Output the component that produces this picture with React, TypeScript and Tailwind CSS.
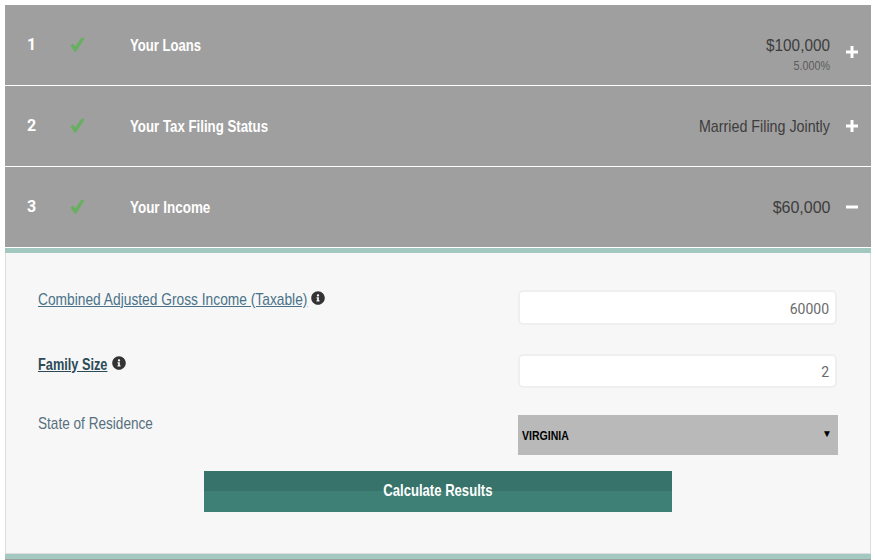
import { FaInfoCircle } from 'react-icons/fa';

const sans = { fontFamily: '"Liberation Sans", Arial, sans-serif' };

function CheckMark() {
  return (
    <svg viewBox="0 0 15 15" className="w-[15px] h-[15px] text-[#66b060]" fill="currentColor">
      <path d="M0.5 8.2 L3 6.6 L5.2 9.6 L11.6 0.5 L14.5 1.6 L6.2 14.5 L4.2 14.5 Z" />
    </svg>
  );
}

function PlusMinus({ open }: { open?: boolean }) {
  return (
    <svg viewBox="0 0 12 12" className="w-[12px] h-[12px] text-white" fill="currentColor">
      <rect x="0" y="4.5" width="12" height="3" />
      {!open && <rect x="4.5" y="0" width="3" height="12" />}
    </svg>
  );
}

function Row({ n, title, titleClass, value, valueClass, sub, open }: { n: number; title: string; titleClass: string; value: string; valueClass: string; sub?: string; open?: boolean }) {
  return (
    <div className="h-[80px] bg-[#9f9f9f] flex items-center pl-[22px] pr-[13px]">
      <span className="w-[43px] text-[16px] font-bold text-white font-['Roboto']">{n}</span>
      <span className="w-[60px] -mt-[2px]">
        <CheckMark />
      </span>
      <span className={`inline-block mt-[2px] origin-left text-[17px] font-bold text-white ${titleClass}`} style={sans}>{title}</span>
      <div className="relative ml-auto flex flex-col items-end pt-[1px]">
        <span className={`inline-block origin-right text-[17px] leading-[20px] text-[#3d3d3d] ${valueClass}`} style={sans}>{value}</span>
        {sub && <span className="absolute right-0 top-[23px] inline-block origin-right scale-x-[.83] text-[13px] leading-[16px] text-[#5c5c5c] whitespace-nowrap" style={sans}>{sub}</span>}
      </div>
      <span className={`ml-[16px] flex ${sub ? 'mt-[14px]' : ''}`}>
        <PlusMinus open={open} />
      </span>
    </div>
  );
}

export default function App() {
  return (
    <div className="h-[560px] overflow-hidden bg-white pt-[5px] pl-[5px] pr-[4px]">
      <div className="flex flex-col gap-[1px]">
        <Row n={1} title="Your Loans" titleClass="scale-x-[.77]" value="$100,000" valueClass="scale-x-[.9]" sub="5.000%" />
        <Row n={2} title="Your Tax Filing Status" titleClass="scale-x-[.78]" value="Married Filing Jointly" valueClass="scale-x-[.84]" />
        <Row n={3} title="Your Income" titleClass="scale-x-[.79]" value="$60,000" valueClass="scale-x-[.94]" open />
      </div>

      <div className="mt-[1px] h-[5px] bg-[#a3c8c0]" />

      {/* Income panel */}
      <div className="h-[301px] bg-[#f7f7f7] border-x border-b border-[#dddddd] pl-[32px] pr-[32px] pt-[37px]">
        <div className="flex h-[64px]">
          <div className="w-[480px] flex items-start text-[17px] leading-[20px] text-[#4a7288]" style={sans}>
            <span className="inline-block origin-left scale-x-[.81] underline whitespace-nowrap">Combined Adjusted Gross Income (Taxable)</span>
            <FaInfoCircle className="ml-[-60px] w-[14px] h-[14px] mt-[1px] text-[#333333]" />
          </div>
          <div className="w-[319px] h-[35px] bg-white border-2 border-[#efefef] rounded-[5px] flex items-center justify-end pt-[4px] pr-[6px] text-[14px] text-[#6b6b6b] font-['Roboto']">60000</div>
        </div>
        <div className="flex h-[61px]">
          <div className="w-[480px] flex items-start pt-[1px] text-[17px] font-bold leading-[20px] text-[#2d4a58]" style={sans}>
            <span className="inline-block origin-left scale-x-[.75] underline whitespace-nowrap">Family Size</span>
            <FaInfoCircle className="ml-[-19px] mt-[1px] w-[14px] h-[14px] text-[#333333]" />
          </div>
          <div className="w-[319px] h-[34px] bg-white border-2 border-[#efefef] rounded-[5px] flex items-center justify-end pt-[2px] pr-[6px] text-[14px] text-[#6b6b6b] font-['Roboto']">2</div>
        </div>
        <div className="flex h-[56px]">
          <div className="w-[480px] text-[17px] leading-[18px] text-[#58707e]" style={sans}>
            <span className="inline-block origin-left scale-x-[.8] whitespace-nowrap">State of Residence</span>
          </div>
          <div className="w-[320px] h-[40px] bg-[#b9b9b9] flex items-center justify-between pl-[4px] pr-[6px]">
            <span className="mt-[2px] inline-block origin-left scale-x-[.81] text-[13px] font-bold text-black" style={sans}>VIRGINIA</span>
            <span className="-mt-[3px] text-[10px] text-black">▼</span>
          </div>
        </div>
        <div className="flex justify-center pr-[1px]">
          <button className="w-[468px] h-[41px] pb-[2px] bg-[linear-gradient(#37736a_50%,#3e8075_50%)] text-[17px] font-bold text-white" style={sans}>
            <span className="inline-block scale-x-[.77]">Calculate Results</span>
          </button>
        </div>
      </div>

      <div className="h-[5px] bg-[#a3c8c0]" />
      <div className="h-[1px] bg-[#9f9f9f]" />
    </div>
  );
}
